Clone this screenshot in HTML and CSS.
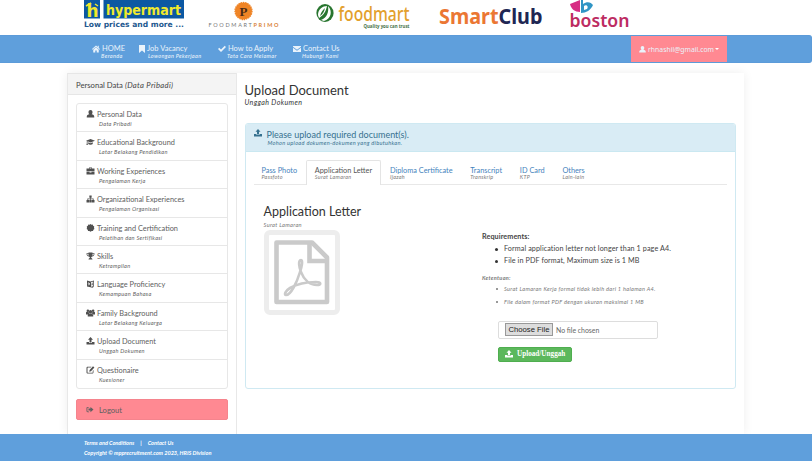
FILE: index.html
```html
<!DOCTYPE html>
<html lang="en">
<head>
<meta charset="utf-8">
<title>Upload Document</title>
<link rel="stylesheet" href="styles.css">
</head>
<body>
<svg class="sprite" aria-hidden="true">
  <symbol id="user" viewBox="0 0 16 16"><path d="M8 0c2.500 0 4 1.800 4 4.300 0 1.800-.8 3.400-1.800 4.100 3.200.6 5.300 2 5.300 5.100V15H.5v-1.500c0-3.100 2.100-4.500 5.300-5.100C4.800 7.700 4 6.100 4 4.300 4 1.800 5.500 0 8 0z"/></symbol>
  <symbol id="home" viewBox="0 0 16 16"><path d="M8 1 0 8l1 1.300L8 3.300l7 6L16 8l-2.500-2.200V1.500h-2v2.600zM8 4.500l-5.500 4.800V15h4v-4h3v4h4V9.300z"/></symbol>
  <symbol id="bookmark" viewBox="0 0 16 16"><path d="M2 0h12v16l-6-5-6 5z"/></symbol>
  <symbol id="check" viewBox="0 0 16 16"><path d="m0 8 2.500-2.500L6 9l7.500-7.500L16 4 6 14z"/></symbol>
  <symbol id="mail" viewBox="0 0 16 16"><path d="M0 2h16v1.500L8 9.500 0 3.500zm0 3.500 8 6 8-6V14H0z"/></symbol>
  <symbol id="cap" viewBox="0 0 18 16"><path d="m9 2 9 3.500L9 9 3 6.700v3.800l.8 3.500H.8l.8-3.500V6.100L0 5.500zM4.500 8.500 9 10.300l4.500-1.800v3.300c-2 2.200-7 2.200-9 0z"/></symbol>
  <symbol id="case" viewBox="0 0 16 16"><path d="M5 3V1h6v2h5v5.500H0V3zm1.300-.9V3h3.400v-.9zM0 9.500h6V11h4V9.500h6V15H0z"/></symbol>
  <symbol id="tree" viewBox="0 0 16 16"><path d="M5.700 1h4.600v4.500H8.700v1.700h5.500v3H16V15h-5v-4.800h1.700V8.700h-4v1.500h1.800V15h-5v-4.800h1.800V8.700h-4v1.500H5V15H0v-4.800h1.800v-3h5.500V5.500H5.700z"/></symbol>
  <symbol id="badge" viewBox="0 0 16 16"><path d="m8 0 2 1.400 2.400-.2.900 2.200L15.500 5 15 7.500l.8 2.300-2 1.600-.8 2.400-2.500.1L8 15.500l-2.300-1.600-2.500-.1-.8-2.400-2-1.600L1 7.500.5 5l2.200-1.600.9-2.200L6 1.400z"/></symbol>
  <symbol id="trophy" viewBox="0 0 16 16"><path d="M4 1h8v1.500h4c0 4-1.800 6-4.600 6.500-1 1-2.100 1.300-2.100 2.500 0 1 2.700 1 2.700 3.500H4c0-2.500 2.700-2.500 2.700-3.500 0-1.200-1.100-1.500-2.100-2.500C1.800 8.500 0 6.500 0 2.500h4zM1.500 4c.3 1.900 1 2.900 2.500 3.300V4zM12 4v3.300c1.500-.4 2.200-1.400 2.500-3.300z"/></symbol>
  <symbol id="lang" viewBox="0 0 16 16"><path fill-rule="evenodd" d="M1 1 8 3l7-2v12l-3 .8L14 16l-6-1.500L1 13zm8 3.500v9l4.500-1.300V3zM4 4.500V6H2.500v1H5c-.3 1.300-1 2.400-2.500 3l.5 1c1-.4 1.700-1 2.200-1.800l1.300 1.300.7-.9-1.500-1.300.4-1.300H7V6H5V4.500zm6.700.9L9.800 11h.9l.2-1.300h1.200l.3 1.200.9-.2-1.500-5.500zm.7 1.600.5 1.700H11z"/></symbol>
  <symbol id="group" viewBox="0 0 18 16"><circle cx="3.800" cy="3.500" r="2.500"/><circle cx="14.200" cy="3.500" r="2.500"/><circle cx="9" cy="5.500" r="3.400"/><path d="M0 11V7c0-1 1-1.500 2-1.500h3L6.500 9l-2 2zm18 0V7c0-1-1-1.500-2-1.500h-3L11.500 9l2 2zM3.500 15c-.5-4 1-6 3-6h5c2 0 3.500 2 3 6z"/></symbol>
  <symbol id="upload" viewBox="0 0 16 16"><path d="m8 0 5 5.500h-3V11H6V5.500H3zM0 10h5v2h6v-2h5v5H0z"/></symbol>
  <symbol id="edit" viewBox="0 0 16 16"><path d="M2.500 1.500H10L8.500 3H3a1 1 0 0 0-1 1v8.500a1 1 0 0 0 1 1h8.500a1 1 0 0 0 1-1V9.500L14 8v4.500c0 1.500-1 2.500-2.500 2.500h-9C1 15 0 14 0 12.500V4c0-1.500 1-2.500 2.500-2.500zM13 .5 15.800 3 9 10.500l-3.500.8.700-3.500z"/></symbol>
  <symbol id="out" viewBox="0 0 16 16"><path d="M6 2v1.500H3a1 1 0 0 0-1 1v7a1 1 0 0 0 1 1h3V14H2.500C1 14 0 13 0 11.500v-7C0 3 1 2 2.500 2zm3 0 7 6-7 6v-3.500H4.500v-5H9z"/></symbol>
</svg>

<header class="brands">
  <svg width="812" height="35" viewBox="0 0 812 35">
    <rect x="84" y="0" width="16" height="18.500" fill="#0c58a2"/>
    <rect x="103.500" y="0" width="80.500" height="18.500" fill="#0c58a2"/>
    <text x="86.500" y="16.500" class="hyper" font-size="17">h</text>
    <path d="M86 6l5-3M95 4l3 2" stroke="#f1e92d" stroke-width="1.500"/>
    <text x="106" y="14.500" class="hyper" font-size="14" textLength="75" lengthAdjust="spacingAndGlyphs">hypermart</text>
    <text x="84" y="26.500" class="low" textLength="100" lengthAdjust="spacingAndGlyphs">Low prices and more ...</text>
    <circle cx="243.500" cy="11" r="8.500" fill="#ef8426" stroke="#ef8426" stroke-width="1.300" stroke-dasharray="1.500 .8"/>
    <text x="239.500" y="16" class="prime-p">P</text>
    <text x="208.500" y="27" class="primo" textLength="70"><tspan fill="#777">FOODMART</tspan><tspan fill="#d98236" font-weight="700">PRIMO</tspan></text>
    <ellipse cx="325" cy="13" rx="8.600" ry="9" fill="#28752f"/>
    <path d="M318 15c0-6 5-9 9-9-1 5-3 9-8 12zM321 20c6-2 8-8 7-14 5 5 3 13-4 15z" fill="#fff"/>
    <path d="M320 16c1-4 3-6 5-8-1 4-2 6-5 8z" fill="#28752f"/>
    <text x="338.500" y="21" class="food" textLength="71" lengthAdjust="spacingAndGlyphs">foodmart</text>
    <text x="363.500" y="27.500" class="quality" textLength="46" lengthAdjust="spacingAndGlyphs">Quality you can trust</text>
    <text x="439" y="23.500" class="smart" textLength="103.500" lengthAdjust="spacingAndGlyphs"><tspan fill="#eb7733">Smart</tspan><tspan fill="#202653">Club</tspan></text>
    <path d="M570 4l10-4v12c-5 0-9-3-10-8z" fill="#d72c83"/>
    <path d="M581 0h2v4c4-3 8-2 10 1-2 5-7 8-12 8z" fill="#3095c5"/>
    <path d="M584 6c2-2 5 0 3 3l-3 1z" fill="#fff"/>
    <text x="569.500" y="27" class="boston" textLength="60" lengthAdjust="spacingAndGlyphs">boston</text>
  </svg>
</header>

<nav class="navbar">
  <a class="nav-home"><span><svg><use href="#home"/></svg>HOME</span><i>Beranda</i></a>
  <a class="nav-job"><span><svg><use href="#bookmark"/></svg>Job Vacancy</span><i>Lowongan Pekerjaan</i></a>
  <a class="nav-apply"><span><svg><use href="#check"/></svg>How to Apply</span><i>Tata Cara Melamar</i></a>
  <a class="nav-contact"><span><svg><use href="#mail"/></svg>Contact Us</span><i>Hubungi Kami</i></a>
  <div class="account"><svg><use href="#user"/></svg><span>rhnashil@gmail.com</span><b class="caret"></b></div>
</nav>

<div class="page">
  <aside class="sidebar">
    <h2>Personal Data <i>(Data Pribadi)</i></h2>
    <ul class="menu">
      <li><svg><use href="#user"/></svg><div>Personal Data<i>Data Pribadi</i></div></li>
      <li><svg><use href="#cap"/></svg><div>Educational Background<i>Latar Belakang Pendidikan</i></div></li>
      <li><svg><use href="#case"/></svg><div>Working Experiences<i>Pengalaman Kerja</i></div></li>
      <li><svg><use href="#tree"/></svg><div>Organizational Experiences<i>Pengalaman Organisasi</i></div></li>
      <li><svg><use href="#badge"/></svg><div>Training and Certification<i>Pelatihan dan Sertifikasi</i></div></li>
      <li><svg><use href="#trophy"/></svg><div>Skills<i>Ketrampilan</i></div></li>
      <li><svg><use href="#lang"/></svg><div>Language Proficiency<i>Kemampuan Bahasa</i></div></li>
      <li><svg><use href="#group"/></svg><div>Family Background<i>Latar Belakang Keluarga</i></div></li>
      <li><svg><use href="#upload"/></svg><div>Upload Document<i>Unggah Dokumen</i></div></li>
      <li><svg><use href="#edit"/></svg><div>Questionaire<i>Kuesioner</i></div></li>
    </ul>
    <a class="logout"><svg><use href="#out"/></svg>Logout</a>
  </aside>

  <main class="content">
    <h1>Upload Document</h1>
    <p class="subtitle">Unggah Dokumen</p>
    <section class="panel">
      <div class="panel-head">
        <svg><use href="#upload"/></svg>
        <div><strong>Please upload required document(s).</strong><i>Mohon upload dokumen-dokumen yang dibutuhkan.</i></div>
      </div>
      <div class="tabs">
        <a>Pass Photo<i>Passfoto</i></a>
        <a class="active">Application Letter<i>Surat Lamaran</i></a>
        <a>Diploma Certificate<i>Ijazah</i></a>
        <a>Transcript<i>Transkrip</i></a>
        <a>ID Card<i>KTP</i></a>
        <a>Others<i>Lain-lain</i></a>
      </div>
      <div class="body">
        <div class="preview">
          <h3>Application Letter</h3>
          <p>Surat Lamaran</p>
          <div class="thumb">
            <svg width="56" height="66" viewBox="0 0 56 66">
              <path d="M2.500 2.500H38L53 17.500V62H2.500z" stroke-width="4.600" stroke-linejoin="round"/>
              <path d="M35.500 3v18H53" stroke-width="4.600"/>
              <path d="M27 20c-3 0-2 7 0 12 3 8 9 13 16 13 5 0 4-3-1-3-10 0-19 2-26 6-5 3-6 7-4 7 5 0 11-13 14-23 2-6 3-12 1-12z" stroke-width="2.600"/>
            </svg>
          </div>
        </div>
        <div class="details">
          <h4>Requirements:</h4>
          <ul class="req">
            <li>Formal application letter not longer than 1 page A4.</li>
            <li>File in PDF format, Maximum size is 1 MB</li>
          </ul>
          <h5>Ketentuan:</h5>
          <ul class="req local">
            <li>Surat Lamaran Kerja formal tidak lebih dari 1 halaman A4.</li>
            <li>File dalam format PDF dengan ukuran maksimal 1 MB</li>
          </ul>
          <div class="file"><button>Choose File</button><span>No file chosen</span></div>
          <button class="submit"><svg><use href="#upload"/></svg>Upload/Unggah</button>
        </div>
      </div>
    </section>
  </main>
</div>

<footer class="footer">
  <p><span>Terms and Conditions</span><span>|</span><span>Contact Us</span></p>
  <p class="copy">Copyright © mpprecruitment.com 2023, HRIS Division</p>
</footer>
</body>
</html>
```
FILE: styles.css
```css
* { box-sizing: border-box; }
body { margin: 0; width: 812px; height: 461px; overflow: hidden; background: #fff; color: #606060; font: 7.35px/10px Lato, "Liberation Sans", sans-serif; display: flex; flex-direction: column; }
h1, h2, h3, h4, h5, p, ul { margin: 0; padding: 0; font-weight: 400; }
ul { list-style: none; }
svg { fill: currentColor; flex: none; }
.sprite { position: absolute; width: 0; height: 0; }

.brands { height: 35px; flex: none; }
.brands svg { display: block; }
.hyper { font-family: "DejaVu Sans", sans-serif; font-weight: 700; fill: #f1e92d; }
.low { font: 700 7.500px "DejaVu Sans", sans-serif; fill: #24598f; }
.prime-p { font: 700 13px "Liberation Serif", serif; fill: #4c2a16; }
.primo { font: 5.500px Lato, sans-serif; }
.food { font: 500 20px "Noto Sans", sans-serif; fill: #e3a02c; }
.quality { font: 700 4.800px "Open Sans", sans-serif; fill: #477247; }
.smart { font: 700 21px "Noto Sans", sans-serif; }
.boston { font: 600 18.500px "Noto Sans", sans-serif; fill: #bd2c62; }

.navbar { height: 28px; flex: none; display: flex; background: #5f9fdc; border: 1px solid #5c9bd9; border-left: 0; border-radius: 0 3px 3px 0; color: #eaf3fb; padding-left: 92px; }
.navbar a { padding-top: 9px; flex: none; }
.navbar a span { display: flex; align-items: center; height: 8px; font-size: 7.500px; white-space: nowrap; }
.navbar a svg { width: 8px; height: 8px; margin-right: 2px; }
.navbar i { display: block; font-size: 5.500px; letter-spacing: .35px; font-weight: 500; line-height: 6px; margin-left: 9px; white-space: nowrap; }
.nav-home { width: 46px; }
.navbar .nav-job svg { margin-right: 1px; }
.nav-job { width: 80px; }
.navbar .nav-job i { margin-left: 10px; }
.nav-apply { width: 75px; }
.account { width: 96px; margin-left: auto; margin-right: 84px; background: #ff8992; display: flex; align-items: center; justify-content: center; font: 6.850px "Noto Sans", sans-serif; }
.account svg { width: 7px; height: 7px; margin-right: 2px; }
.caret { border: 2px solid transparent; border-top-color: #fff; border-bottom: 0; margin-left: 1px; }

.page { width: 677px; height: 361px; flex: none; margin: 10px 0 0 67px; display: flex; box-shadow: 0 0 10px #00000012; }
.sidebar { width: 170px; flex: none; border: solid #e8e8e8; border-width: 0 1px; }
.sidebar h2 { height: 22px; background: #f4f4f4; border: solid #e6e6e6; border-width: 1px 0; padding: 0 8px; font-size: 7.700px; line-height: 22px; color: #444; }
.sidebar h2 i { letter-spacing: .3px; }
.menu { margin: 8px 8px 0; border: 1px solid #e7e7e7; border-radius: 3px; }
.menu li { height: 28.400px; display: flex; padding: 6px 0 0 9px; border-bottom: 1px solid #e7e7e7; }
.menu li:last-child { border: 0; }
.menu svg { width: 9px; height: 8px; margin-right: 2px; color: #505050; }
.menu i { display: block; font-size: 5.600px; letter-spacing: .3px; line-height: 7px; margin-left: 2px; }
.logout { display: flex; align-items: center; height: 21px; margin: 10.500px 8px 0; padding-left: 9px; background: #ff8992; border: 1px solid #f5848d; border-radius: 2px; font-size: 7.600px; }
.logout svg { width: 8px; height: 7px; margin-right: 5px; }

.content { flex: 1; padding: 10px 8px 0 7.500px; }
.content h1 { font-size: 13px; line-height: 15px; color: #333; }
.subtitle { font-size: 7px; letter-spacing: .4px; line-height: 8px; font-style: italic; color: #333; }
.panel { height: 266px; margin-top: 17px; border: 1px solid #cfe9f2; border-radius: 3px; overflow: hidden; }
.panel-head { height: 28px; display: flex; background: #d9ecf5; border-bottom: 1px solid #cae8f1; color: #36718f; padding: 5px 0 0 8px; }
.panel-head svg { width: 8px; height: 8px; margin-right: 5px; }
.panel-head strong { display: block; font-size: 9px; font-weight: 400; line-height: 11px; }
.panel-head i { display: block; font-size: 5.600px; letter-spacing: .3px; line-height: 6px; margin-left: 1px; }
.tabs { display: flex; height: 25px; margin: 8px 8px 0; border-bottom: 1px solid #e8e8e8; color: #4583bd; }
.tabs a { padding: 7px 9px 0 8px; height: 25px; line-height: 8px; white-space: nowrap; }
.tabs a + a { padding-left: 8.800px; }
.tabs .active { border: 1px solid #e4e4e4; border-bottom: 0; border-radius: 2px 2px 0 0; background: #fff; color: #555; padding: 6px 8px 0 7.750px !important; }
.tabs i { display: block; color: #777; font-size: 5.400px; letter-spacing: .3px; line-height: 5px; }
.body { display: flex; padding: 19px 18px 0; }
.preview { width: 218.500px; flex: none; }
.preview h3 { font-size: 12.500px; line-height: 16px; color: #333; }
.preview p { font-size: 5.700px; letter-spacing: .3px; line-height: 9px; font-style: italic; color: #777; }
.thumb { width: 76px; height: 85px; margin-top: 1px; border: 5px solid #ededed; border-radius: 6px; display: grid; place-items: center; }
.thumb svg { fill: none; stroke: #cacaca; }
.details { padding-top: 27px; color: #444; white-space: nowrap; }
.details h4 { font-weight: 700; font-size: 7.200px; letter-spacing: .1px; line-height: 12px; }
.req li { display: flex; align-items: center; height: 12px; font-size: 7.200px; letter-spacing: .1px; padding-left: 13px; }
.req li::before { content: ""; width: 3px; height: 3px; border-radius: 50%; background: #333; margin-right: 6px; }
.details h5 { margin-top: 6px; font-size: 5.500px; letter-spacing: .3px; font-weight: 700; font-style: italic; line-height: 10px; color: #777; }
.local li { font-size: 5.600px; letter-spacing: .3px; font-style: italic; color: #777; height: 12.400px; }
.local li::before { width: 2px; height: 2px; margin-left: 1px; background: #777; }
.file { width: 160px; height: 18px; margin: 13px 0 0 16px; border: 1px solid #ddd; border-radius: 2px; display: flex; align-items: center; padding-left: 6px; color: #666; font-size: 6.900px; }
.file button { width: 48px; height: 13px; padding: 0; border: 1px solid #999; background: #ddd; font: 7.700px "Liberation Sans", sans-serif; color: #222; margin-right: 3px; }
.submit { display: flex; align-items: center; width: 74px; height: 15px; margin: 8px 0 0 16px; padding: 0 6px; background: #5cb85c; border: 1px solid #4fae4f; border-radius: 2px; color: #fff; font: 700 7.200px "Liberation Serif", serif; }
.submit svg { width: 8px; height: 8px; margin-right: 4px; }

.footer { height: 27px; flex: none; background: #5f9fdc; color: #fff; font-size: 5.550px; font-style: italic; padding: 4px 0 0 84px; }
.footer p { display: flex; gap: 6px; font-weight: 700; }
```
